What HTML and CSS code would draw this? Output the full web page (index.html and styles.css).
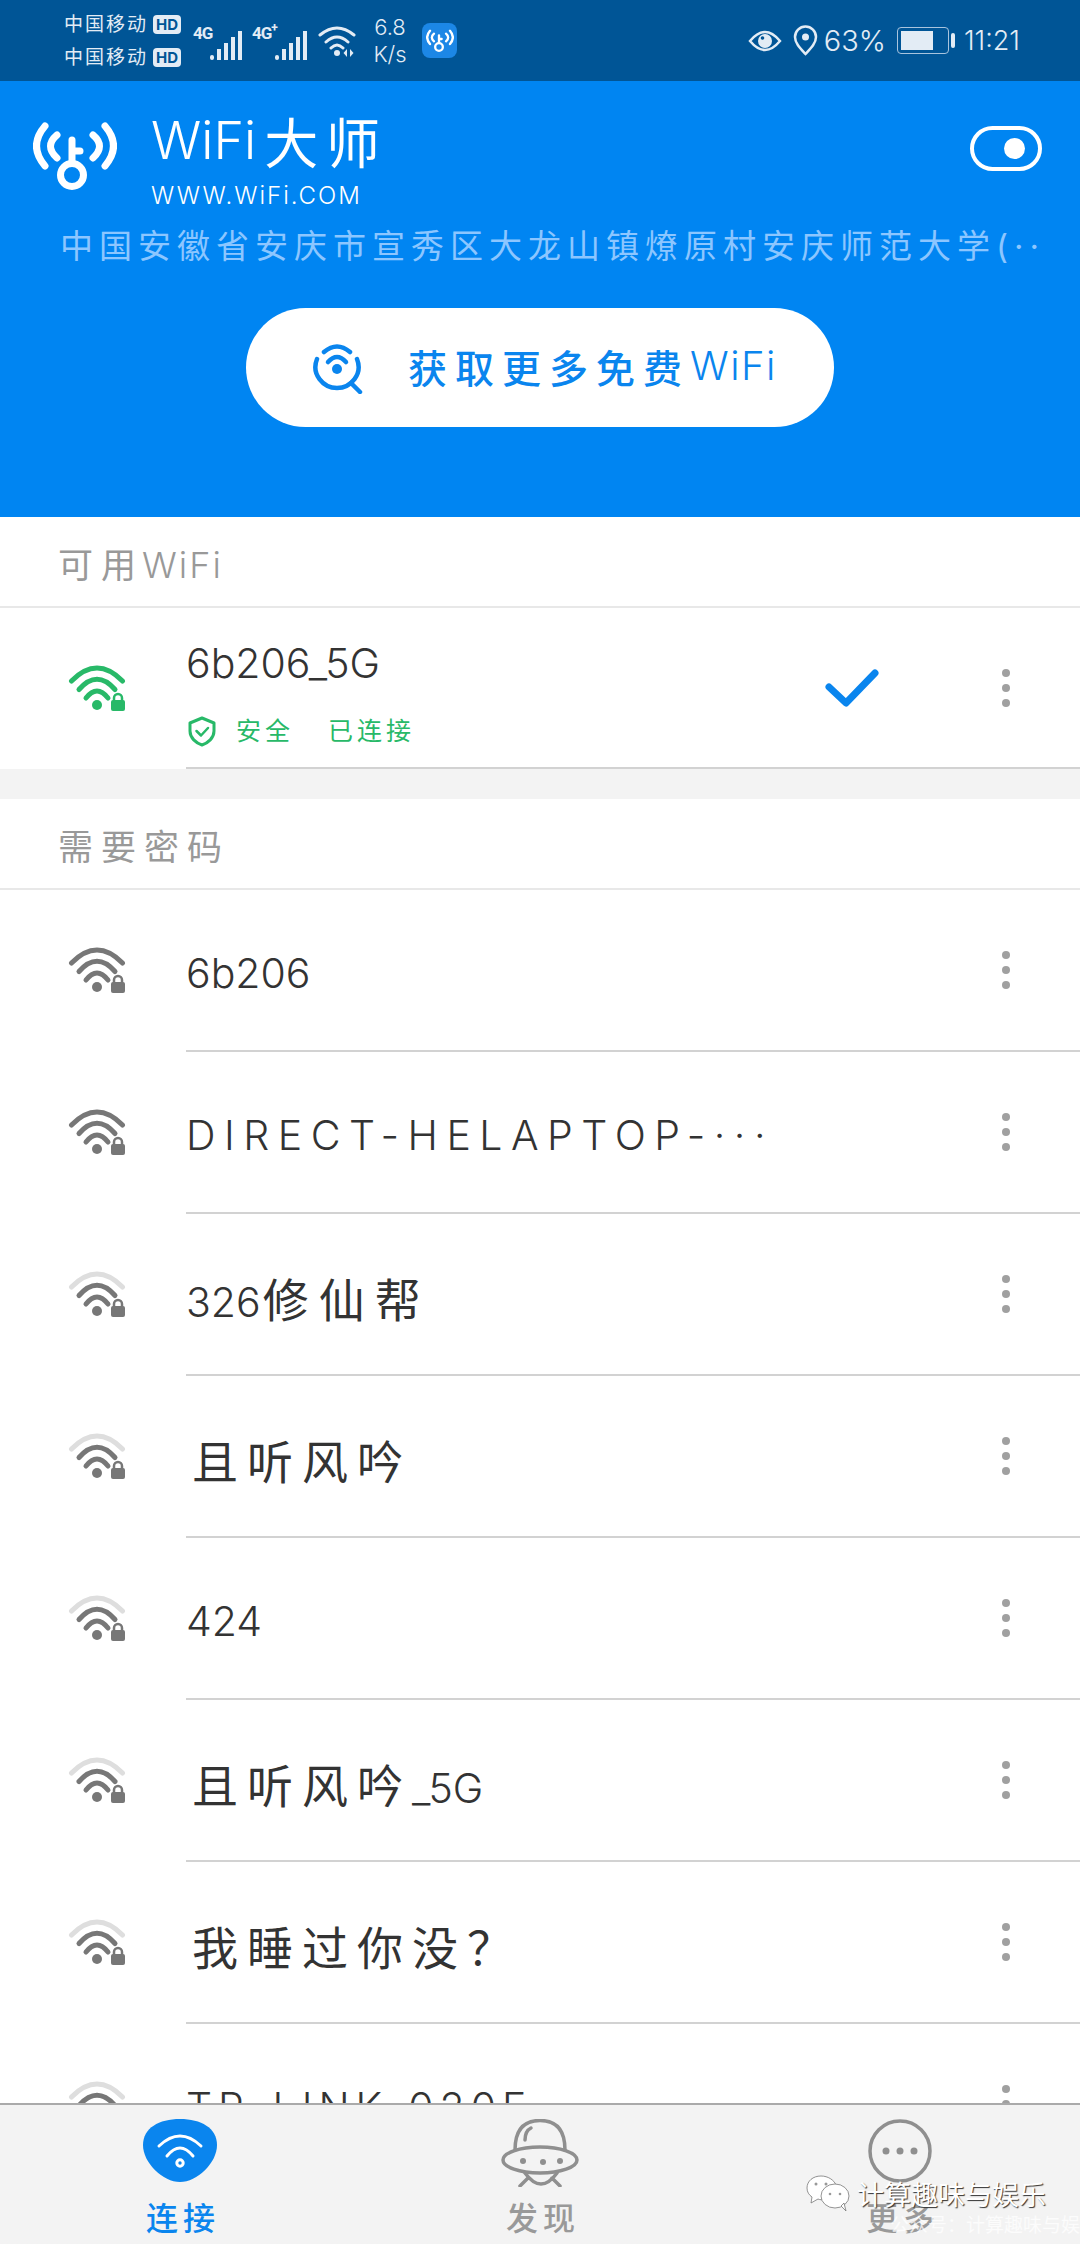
FILE: index.html
```html
<!DOCTYPE html>
<html lang="zh">
<head>
  <meta charset="UTF-8">
  <title>WiFi大师</title>
  <link rel="stylesheet" href="styles.css">
</head>
<body>
  <svg class="defs" width="0" height="0">
    <symbol id="wifi-lock" viewBox="0 0 60 48">
      <path class="arc-outer" d="M3.5 16 Q29 -10 54.5 16"/>
      <path class="arc-mid" d="M11 24.5 Q29 4 47 24.5"/>
      <path class="arc-in" d="M18 33 Q29 19 40 33"/>
      <circle class="arc-dot" cx="29" cy="40" r="5"/>
      <path class="arc-shackle" d="M46 36 v-3 a4 4 0 0 1 8 0 v3"/>
      <rect class="arc-dot" x="43" y="35" width="14" height="11" rx="2"/>
    </symbol>
    <symbol id="bars" viewBox="0 0 33 30">
      <rect x="0" y="24" width="4" height="5" rx="2"/>
      <rect x="7" y="18" width="4" height="11"/>
      <rect x="14" y="12" width="4" height="17"/>
      <rect x="21" y="6" width="4" height="23"/>
      <rect x="28" y="0" width="4" height="29"/>
    </symbol>
  </svg>

  <div class="status-bar">
    <div class="carriers">
      <div class="carrier">中国移动<span class="hd">HD</span></div>
      <div class="carrier">中国移动<span class="hd">HD</span></div>
    </div>
    <span class="net">4G</span>
    <svg class="bars"><use href="#bars"/></svg>
    <span class="net net-plus">4G<sup>+</sup></span>
    <svg class="bars"><use href="#bars"/></svg>
    <svg class="st-wifi" viewBox="0 0 38 32">
      <path d="M2 10 Q19 -4 36 10 M8 17 Q19 7 30 17 M13 23 Q19 17 25 23" fill="none" stroke="#e3ecf5" stroke-width="3" stroke-linecap="round"/>
      <circle cx="19" cy="28" r="3" fill="#e3ecf5"/>
      <path d="M29 24 l-3.500 4 l3.500 4z M32 24 l3.500 4 l-3.500 4z" fill="#e3ecf5"/>
    </svg>
    <div class="speed"><span>6.8</span><span>K/s</span></div>
    <div class="app-badge">
      <svg viewBox="0 0 84 70" width="28" height="24"><use href="#logo"/></svg>
    </div>
    <div class="status-right">
      <svg class="eye" viewBox="0 0 34 24">
        <path d="M2 12 Q17 -6 32 12 Q17 30 2 12Z" fill="none" stroke="#e3ecf5" stroke-width="2.500"/>
        <circle cx="17" cy="12" r="7" fill="#e3ecf5"/>
        <circle cx="14.500" cy="9" r="1.800" fill="#005596"/>
      </svg>
      <svg class="pin" viewBox="0 0 25 31">
        <path d="M12.500 29 C7 23 2 18 2 12 A10.500 10.500 0 0 1 23 12 C23 18 18 23 12.500 29Z" fill="none" stroke="#e3ecf5" stroke-width="2.500"/>
        <circle cx="12.500" cy="12" r="3.500" fill="#e3ecf5"/>
      </svg>
      <span class="pct">63%</span>
      <div class="battery"><div class="battery-fill"></div></div>
      <div class="battery-nub"></div>
      <span class="clock">11:21</span>
    </div>
  </div>

  <header class="top">
    <div class="brand-row">
      <svg class="logo" viewBox="0 0 84 70">
        <symbol id="logo" viewBox="0 0 84 70">
          <g fill="none" stroke="#fff" stroke-width="7" stroke-linecap="round">
            <path d="M12 4 Q-5 24 12 44"/>
            <path d="M72 4 Q89 24 72 44"/>
            <path d="M24 13 Q11 24 24 36"/>
            <path d="M60 13 Q73 24 60 36"/>
            <circle cx="39" cy="53" r="11.500"/>
            <path d="M39 40 V18 M39 29 H47"/>
          </g>
        </symbol>
        <use href="#logo"/>
      </svg>
      <div class="brand">
        <div class="brand-name">WiFi<span class="brand-cn">大师</span></div>
        <div class="brand-url">WWW.WiFi.COM</div>
      </div>
      <div class="toggle"><div class="toggle-knob"></div></div>
    </div>
    <div class="address">中国安徽省安庆市宣秀区大龙山镇燎原村安庆师范大学(··</div>
    <div class="more-btn">
      <svg class="more-icon" viewBox="0 0 50 52">
        <g fill="none" stroke="#0a85ee" stroke-width="4.500" stroke-linecap="round">
          <path d="M11 10 Q24 -1 37 10"/>
          <path d="M4 17 C-2 32 10 46 24 46 C38 46 50 32 44 17"/>
          <path d="M15 20 Q24 10 33 20"/>
          <path d="M38 41 L47 50"/>
        </g>
        <circle cx="24" cy="27" r="5" fill="#0a85ee"/>
      </svg>
      <span class="more-text"><span class="more-cn">获取更多免费</span>WiFi</span>
    </div>
  </header>

  <main class="list">
    <div class="section-title">可用<span class="latin">WiFi</span></div>

    <div class="row row-current">
      <svg class="wifi green"><use href="#wifi-lock"/></svg>
      <div class="row-body">
        <div class="row-text">
          <div class="name">6b206_5G</div>
          <div class="state">
            <svg class="shield" viewBox="0 0 28 31">
              <path d="M14 2 L26 7 V15 C26 22 20 27 14 29 C8 27 2 22 2 15 V7Z" fill="none" stroke="#28b968" stroke-width="3" stroke-linejoin="round"/>
              <path d="M8.500 15 L13 19.500 L20 12" fill="none" stroke="#28b968" stroke-width="2.500" stroke-linecap="round" stroke-linejoin="round"/>
            </svg>
            <span class="state-a">安全</span>
            <span>已连接</span>
          </div>
        </div>
        <svg class="check" viewBox="0 0 56 42">
          <path d="M5 20 L22 36 L51 6" fill="none" stroke="#0a85ee" stroke-width="7" stroke-linecap="round" stroke-linejoin="round"/>
        </svg>
        <div class="dots"><i></i><i></i><i></i></div>
      </div>
    </div>

    <div class="gap"></div>
    <div class="section-title section-cn">需要密码</div>

    <div class="row">
      <svg class="wifi"><use href="#wifi-lock"/></svg>
      <div class="row-body"><div class="name">6b206</div><div class="dots"><i></i><i></i><i></i></div></div>
    </div>
    <div class="row">
      <svg class="wifi"><use href="#wifi-lock"/></svg>
      <div class="row-body"><div class="name name-wider">DIRECT-HELAPTOP-···</div><div class="dots"><i></i><i></i><i></i></div></div>
    </div>
    <div class="row">
      <svg class="wifi weak"><use href="#wifi-lock"/></svg>
      <div class="row-body"><div class="name">326<span class="cn cn-tight">修仙帮</span></div><div class="dots"><i></i><i></i><i></i></div></div>
    </div>
    <div class="row">
      <svg class="wifi weak"><use href="#wifi-lock"/></svg>
      <div class="row-body"><div class="name"><span class="cn">且听风吟</span></div><div class="dots"><i></i><i></i><i></i></div></div>
    </div>
    <div class="row">
      <svg class="wifi weak"><use href="#wifi-lock"/></svg>
      <div class="row-body"><div class="name">424</div><div class="dots"><i></i><i></i><i></i></div></div>
    </div>
    <div class="row">
      <svg class="wifi weak"><use href="#wifi-lock"/></svg>
      <div class="row-body"><div class="name"><span class="cn">且听风吟</span>_5G</div><div class="dots"><i></i><i></i><i></i></div></div>
    </div>
    <div class="row">
      <svg class="wifi weak"><use href="#wifi-lock"/></svg>
      <div class="row-body"><div class="name"><span class="cn">我睡过你没？</span></div><div class="dots"><i></i><i></i><i></i></div></div>
    </div>
    <div class="row">
      <svg class="wifi weak"><use href="#wifi-lock"/></svg>
      <div class="row-body"><div class="name name-wide">TP-LINK-020F</div><div class="dots"><i></i><i></i><i></i></div></div>
    </div>
  </main>

  <nav class="tabs">
    <div class="tab tab-on">
      <svg class="tab-icon" width="74" height="63" viewBox="0 0 74 63">
        <path d="M37 0 C58 0 74 9 74 26 C74 44 54 63 37 63 C20 63 0 44 0 26 C0 9 16 0 37 0Z" fill="#0a85ee"/>
        <path d="M16 27 Q37 7 58 27 M24 37 Q37 21 50 37" fill="none" stroke="#fff" stroke-width="3" stroke-linecap="round"/>
        <circle cx="37" cy="44" r="3.200" fill="none" stroke="#fff" stroke-width="3"/>
      </svg>
      <span>连接</span>
    </div>
    <div class="tab">
      <svg class="tab-icon" width="78" height="68" viewBox="0 0 78 68">
        <g fill="none" stroke="#8f8f8f" stroke-width="3.500" stroke-linecap="round">
          <path d="M14 31 C14 10 24 1.500 39 1.500 C54 1.500 64 10 64 31"/>
          <path d="M30 9 Q24 12 24 21"/>
          <ellipse cx="39" cy="41" rx="37" ry="13"/>
          <path d="M24 54 Q40 76 56 54 M19 67 L27 59 M59 67 L51 59"/>
        </g>
        <g fill="#8f8f8f">
          <circle cx="22" cy="42" r="3"/><circle cx="42" cy="43" r="3"/><circle cx="59" cy="42" r="3"/>
        </g>
      </svg>
      <span>发现</span>
    </div>
    <div class="tab">
      <svg class="tab-icon" width="64" height="64" viewBox="0 0 64 64">
        <circle cx="32" cy="32" r="30" fill="none" stroke="#8f8f8f" stroke-width="3.500"/>
        <g fill="#8f8f8f">
          <circle cx="18" cy="32" r="3.500"/><circle cx="32" cy="32" r="3.500"/><circle cx="46" cy="32" r="3.500"/>
        </g>
      </svg>
      <span>更多</span>
    </div>
  </nav>

  <div class="watermark">
    <svg class="wm-icon" viewBox="0 0 44 38">
      <path d="M15 1 C7 1 1 6 1 13 C1 17 3 20 6 22 L5 28 L12 24 C14 25 17 25 19 24 L30 10 C28 5 22 1 15 1Z" fill="#fff" stroke="#777" stroke-width=".8"/>
      <ellipse cx="29" cy="21" rx="14" ry="12" fill="#fff" stroke="#777" stroke-width=".8"/>
      <path d="M35 31 L40 36 L38 28Z" fill="#fff" stroke="#777" stroke-width=".8"/>
      <g fill="#999">
        <circle cx="10" cy="9" r="1.500"/><circle cx="20" cy="9" r="1.500"/><circle cx="24" cy="19" r="1.300"/><circle cx="34" cy="19" r="1.300"/>
      </g>
    </svg>
    <span class="wm-title">计算趣味与娱乐</span>
    <span class="wm-sub">公众号：计算趣味与娱乐</span>
  </div>
</body>
</html>
```

FILE: styles.css
```css
html, body {
  margin: 0;
  padding: 0;
}

body {
  position: relative;
  width: 1080px;
  height: 2244px;
  overflow: hidden;
  display: flex;
  flex-direction: column;
  background: #fff;
  font-family: Inter, "Noto Sans CJK SC", sans-serif;
  color: #333;
}

.defs {
  position: absolute;
}

/* status bar */
.status-bar {
  flex: none;
  height: 81px;
  display: flex;
  align-items: center;
  padding-left: 64px;
  background: #005596;
  color: #e3ecf5;
}

.carriers {
  display: flex;
  flex-direction: column;
  gap: 14px;
  width: 129px;
}

.carrier {
  display: flex;
  align-items: center;
  height: 19px;
  font-size: 19px;
  letter-spacing: 2px;
  line-height: 19px;
}

.hd {
  margin-left: 5px;
  width: 28px;
  height: 19px;
  border-radius: 4px;
  background: #e3ecf5;
  color: #005596;
  font-size: 15px;
  font-weight: 700;
  letter-spacing: 0;
  text-align: center;
}

.net {
  align-self: flex-start;
  margin-top: 23px;
  width: 17px;
  font-family: Roboto, sans-serif;
  font-size: 17px;
  font-weight: 700;
  letter-spacing: -1px;
  line-height: 20px;
}

.net-plus {
  margin-left: 9px;
  width: 23px;
}

.net-plus sup {
  font-size: 12px;
  line-height: 0;
}

.bars {
  width: 33px;
  height: 30px;
  margin-top: 11px;
  fill: #e3ecf5;
}

.st-wifi {
  width: 38px;
  height: 32px;
  margin-left: 10px;
}

.speed {
  display: flex;
  flex-direction: column;
  align-items: center;
  width: 36px;
  margin-left: 16px;
  font-size: 22px;
  font-weight: 300;
  line-height: 27px;
}

.app-badge {
  display: flex;
  align-items: center;
  justify-content: center;
  width: 35px;
  height: 35px;
  margin-left: 14px;
  border-radius: 8px;
  background: #1c87e6;
}

.status-right {
  display: flex;
  align-items: center;
  margin-left: auto;
  padding-right: 60px;
}

.eye {
  width: 34px;
  height: 24px;
}

.pin {
  width: 25px;
  height: 31px;
  margin-left: 11px;
}

.pct {
  margin-left: 6px;
  font-size: 29px;
  font-weight: 300;
}

.battery {
  box-sizing: border-box;
  width: 52px;
  height: 27px;
  margin-left: 11px;
  padding: 3px;
  border: 1px solid #a8c4de;
  border-radius: 4px;
}

.battery-fill {
  width: 32px;
  height: 100%;
  background: #e3ecf5;
}

.battery-nub {
  width: 4px;
  height: 15px;
  margin-left: 2px;
  border-radius: 2px;
  background: #e3ecf5;
}

.clock {
  margin-left: 9px;
  font-size: 27px;
  font-weight: 300;
}

/* blue header */
.top {
  flex: none;
  height: 436px;
  box-sizing: border-box;
  padding-top: 41px;
  background: #0085f2;
  color: #fff;
}

.brand-row {
  display: flex;
  align-items: flex-start;
  padding-left: 33px;
}

.logo {
  width: 84px;
  height: 70px;
}

.brand {
  margin-left: 34px;
  margin-top: -10px;
}

.brand-name {
  display: flex;
  align-items: center;
  height: 56px;
  font-size: 52px;
  font-weight: 300;
}

.brand-cn {
  margin-left: 8px;
  font-size: 54px;
  letter-spacing: 8px;
  font-weight: 400;
}

.brand-url {
  margin-top: 14px;
  font-size: 24px;
  font-weight: 300;
  letter-spacing: 2px;
  line-height: 28px;
}

.toggle {
  box-sizing: border-box;
  display: flex;
  align-items: center;
  justify-content: flex-end;
  width: 72px;
  height: 45px;
  margin-left: auto;
  margin-right: 38px;
  margin-top: 4px;
  padding-right: 13px;
  border: 4px solid #fff;
  border-radius: 23px;
}

.toggle-knob {
  width: 21px;
  height: 21px;
  border-radius: 50%;
  background: #fff;
}

.address {
  margin-top: 14px;
  padding-left: 60px;
  font-size: 33px;
  letter-spacing: 6px;
  line-height: 44px;
  white-space: nowrap;
  color: #8cc6ff;
}

.more-btn {
  display: flex;
  align-items: center;
  width: 588px;
  height: 119px;
  margin: 40px 0 0 246px;
  border-radius: 60px;
  background: #fff;
  color: #0a85ee;
}

.more-icon {
  width: 50px;
  height: 52px;
  margin-left: 67px;
}

.more-text {
  display: flex;
  align-items: center;
  margin-left: 45px;
  padding-bottom: 4px;
  font-size: 40px;
  font-weight: 300;
  letter-spacing: 1.5px;
}

.more-cn {
  font-size: 39px;
  letter-spacing: 8px;
  font-weight: 500;
}

/* list */
.list {
  flex: 1;
  min-height: 0;
  overflow: hidden;
}

.section-title {
  box-sizing: border-box;
  height: 91px;
  padding: 24px 0 0 58px;
  border-bottom: 2px solid #e8e8e8;
  font-size: 35px;
  letter-spacing: 8px;
  line-height: 48px;
  color: #999;
}

.latin {
  margin-left: -2px;
  font-size: 36px;
  font-weight: 300;
  letter-spacing: 2px;
}

.section-cn {
  letter-spacing: 8px;
}

.row {
  display: flex;
  height: 162px;
  box-sizing: border-box;
  align-items: center;
}

.row-current {
  height: 161px;
}

.wifi {
  flex: none;
  width: 60px;
  height: 48px;
  margin-left: 68px;
  margin-right: 58px;
  --outer: #777;
  --inner: #777;
}

.wifi.weak {
  --outer: #dedede;
}

.wifi.green {
  --outer: #28b968;
  --inner: #28b968;
}

.arc-outer, .arc-mid, .arc-in, .arc-shackle {
  fill: none;
  stroke-width: 5;
  stroke-linecap: round;
}

.arc-outer {
  stroke: var(--outer);
}

.arc-mid, .arc-in {
  stroke: var(--inner);
}

.arc-shackle {
  stroke: var(--inner);
  stroke-width: 2.5;
}

.arc-dot {
  fill: var(--inner);
}

.row-body {
  flex: 1;
  align-self: stretch;
  display: flex;
  align-items: center;
  padding: 0 70px 0 0;
  border-bottom: 2px solid #d2d2d2;
}

.row-text {
  flex: 1;
}

.name {
  flex: 1;
  padding-top: 5px;
  font-size: 41px;
  font-weight: 300;
  white-space: nowrap;
  color: #333;
}

.name-wide {
  letter-spacing: 6px;
}

.name-wider {
  letter-spacing: 8.5px;
}

.cn {
  margin-left: 6px;
  font-size: 46px;
  font-weight: 400;
  letter-spacing: 9px;
}

.cn-tight {
  margin-left: 2px;
  letter-spacing: 10px;
}

.row-current .name {
  padding-top: 0;
  line-height: 50px;
  margin-top: 10px;
}

.state {
  display: flex;
  align-items: center;
  margin-top: 28px;
  margin-left: 2px;
  font-size: 25px;
  letter-spacing: 4px;
  line-height: 31px;
  color: #28b968;
}

.shield {
  width: 28px;
  height: 31px;
}

.state-a {
  margin-left: 20px;
  margin-right: 34px;
}

.check {
  width: 56px;
  height: 42px;
  margin-right: 122px;
}

.dots {
  display: flex;
  flex-direction: column;
  gap: 7px;
}

.dots i {
  display: block;
  width: 8px;
  height: 8px;
  border-radius: 50%;
  background: #a0a0a0;
}

.gap {
  height: 30px;
  background: #f3f3f3;
}

/* bottom tabs */
.tabs {
  flex: none;
  height: 141px;
  box-sizing: border-box;
  display: grid;
  grid-template-columns: repeat(3, 360px);
  border-top: 2px solid #aaa;
  background: #f3f3f3;
}

.tab {
  height: 139px;
  font-size: 32px;
  letter-spacing: 5px;
  font-weight: 500;
  color: #999;
  display: flex;
  flex-direction: column;
  align-items: center;
}

.tab-icon {
  flex: none;
  margin-top: 14px;
  margin-bottom: auto;
}

.tab span {
  padding-left: 6px;
  padding-bottom: 3px;
  line-height: 44px;
}

.tab-on {
  color: #0a85ee;
}

.watermark {
  position: absolute;
  left: 806px;
  top: 2175px;
  width: 270px;
  height: 64px;
}

.wm-icon {
  position: absolute;
  left: 0;
  top: 0;
  width: 44px;
  height: 38px;
}

.wm-title {
  position: absolute;
  left: 51px;
  top: 3px;
  font-size: 27px;
  line-height: 36px;
  white-space: nowrap;
  color: #fff;
  text-shadow: 1px 1px 1px #333;
}

.wm-sub {
  position: absolute;
  left: 84px;
  top: 38px;
  font-size: 19px;
  line-height: 26px;
  white-space: nowrap;
  color: rgba(255, 255, 255, .75);
}
```
